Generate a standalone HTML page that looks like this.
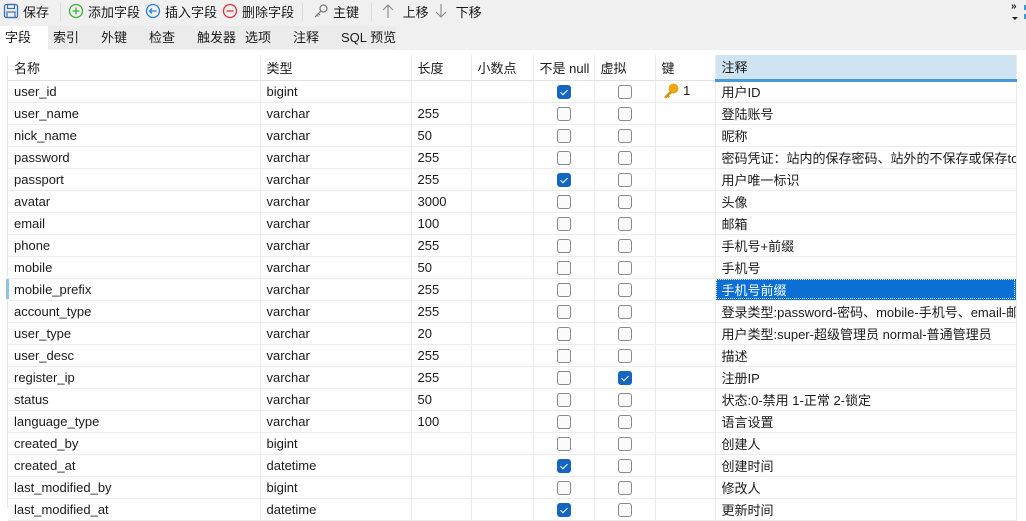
<!DOCTYPE html>
<html><head><meta charset="utf-8">
<style>
*{box-sizing:border-box;margin:0;padding:0}
body{width:1026px;height:508px;overflow:hidden;background:#fff;font-family:"Liberation Sans","Noto Sans CJK SC",sans-serif;font-size:13px;color:#1a1a1a;position:relative}
.tb{position:absolute;left:0;top:0;width:1026px;height:50px;background:#f0f0f0}
.btn{position:absolute;top:1px;height:20px;display:flex;align-items:center;gap:4px;font-size:13px}
.sep{position:absolute;top:3px;width:1px;height:18px;background:#dcdcdc}
.tab{position:absolute;top:26px;height:24px;line-height:24px;font-size:13px;padding-left:5px}
.tabs-bg{position:absolute;top:26px;left:48px;width:348px;height:23px;background:#ebebeb}
.act{background:#fff;left:0;width:48px;height:24px}
table{position:absolute;left:8px;top:55px;border-collapse:collapse;table-layout:fixed;width:1008px}
td,th{height:22px;border-right:1px solid #ececec;border-bottom:1px solid #ececec;padding-left:6px;font-weight:normal;text-align:left;white-space:nowrap;overflow:hidden;font-size:13px}
th{height:26px;border-bottom:1px solid #e2e2e2}
th.cm{background:#cfe4f3;border-bottom:3px solid #4a98dc}
.c{text-align:center;padding:0}
.cb{display:inline-block;width:14px;height:14px;border:1px solid #8a8a8a;border-radius:3px;vertical-align:middle;background:#fbfbfb}
.ck{background:#1566c0;border-color:#1566c0;position:relative}
.ck:after{content:"";position:absolute;left:4px;top:2px;width:3px;height:6px;border:solid #fff;border-width:0 1.2px 1.2px 0;transform:rotate(45deg)}
tr.sel td.cm{background:#0b6fd4;color:#fff;outline:1px dotted #fff;outline-offset:-2px}
.gut{position:absolute;left:0;top:56px;width:8px;height:452px;border-right:1px solid #e6e6e6}
</style></head><body>
<div class="tb">
 <div class="btn" style="left:3px"><svg width="16" height="16" viewBox="0 0 16 16"><rect x="1.5" y="1.5" width="13" height="13" rx="2" fill="none" stroke="#3b6fb0" stroke-width="1.3"/><rect x="4.5" y="1.5" width="7" height="4" fill="none" stroke="#3b6fb0" stroke-width="1.2"/><rect x="4" y="9" width="8" height="5.5" fill="none" stroke="#3b6fb0" stroke-width="1.2"/></svg>保存</div>
 <div class="sep" style="left:60px"></div>
 <div class="btn" style="left:68px"><svg width="16" height="16" viewBox="0 0 16 16"><circle cx="8" cy="8" r="6.5" fill="none" stroke="#3fae3a" stroke-width="1.3"/><path d="M8 4.5v7M4.5 8h7" stroke="#3fae3a" stroke-width="1.3"/></svg>添加字段</div>
 <div class="btn" style="left:145px"><svg width="16" height="16" viewBox="0 0 16 16"><circle cx="8" cy="8" r="6.5" fill="none" stroke="#2a7fd6" stroke-width="1.3"/><path d="M11.5 8h-7M7 5.5L4.5 8 7 10.5" fill="none" stroke="#2a7fd6" stroke-width="1.3"/></svg>插入字段</div>
 <div class="btn" style="left:222px"><svg width="16" height="16" viewBox="0 0 16 16"><circle cx="8" cy="8" r="6.5" fill="none" stroke="#d9343a" stroke-width="1.3"/><path d="M4.5 8h7" stroke="#d9343a" stroke-width="1.3"/></svg>删除字段</div>
 <div class="sep" style="left:302px"></div>
 <div class="btn" style="left:313px"><svg width="16" height="16" viewBox="0 0 16 16"><circle cx="10.5" cy="5.5" r="3.5" fill="none" stroke="#777" stroke-width="1.2"/><path d="M8 8L2 14M4 12l1.5 1.5M5.5 10.5L7 12" stroke="#777" stroke-width="1.2"/></svg>主键</div>
 <div class="sep" style="left:371px"></div>
 <div class="btn" style="left:381px"><svg width="14" height="16" viewBox="0 0 14 16"><path d="M7 15V2M2 7l5-5 5 5" fill="none" stroke="#888" stroke-width="1.1"/></svg>&nbsp;上移</div>
 <div class="btn" style="left:434px"><svg width="14" height="16" viewBox="0 0 14 16"><path d="M7 1v13M2 9l5 5 5-5" fill="none" stroke="#888" stroke-width="1.1"/></svg>&nbsp;下移</div>
 <div style="position:absolute;left:1011px;top:1px;font-size:10px;font-weight:bold">»</div>
 <div style="position:absolute;left:1012px;top:17px;width:0;height:0;border-left:3px solid transparent;border-right:3px solid transparent;border-top:3px solid #222"></div>
 <div style="position:absolute;left:1024px;top:5px;width:2px;height:5px;background:#3a9ad9"></div>
 <div style="position:absolute;left:1024px;top:14px;width:2px;height:5px;background:#3a9ad9"></div>
</div>
<div class="tabs-bg"></div>
<div class="tab act">字段</div>
<div class="tab" style="left:48px">索引</div>
<div class="tab" style="left:96px">外键</div>
<div class="tab" style="left:144px">检查</div>
<div class="tab" style="left:192px">触发器</div>
<div class="tab" style="left:240px">选项</div>
<div class="tab" style="left:288px">注释</div>
<div class="tab" style="left:336px">SQL 预览</div>
<div class="gut"></div>
<div style="position:absolute;left:6px;top:279px;width:3px;height:20px;background:#8cc3ec"></div>
<table>
<colgroup><col style="width:252px"><col style="width:151px"><col style="width:60px"><col style="width:62px"><col style="width:61px"><col style="width:61px"><col style="width:60px"><col style="width:301px"></colgroup>
<tr><th style="height:25px">名称</th><th style="height:25px">类型</th><th style="height:25px">长度</th><th style="height:25px">小数点</th><th style="height:25px">不是 null</th><th style="height:25px">虚拟</th><th style="height:25px">键</th><th class="cm" style="height:25px">注释</th></tr>
<tr><td>user_id</td><td>bigint</td><td></td><td></td><td class="c"><span class="cb ck"></span></td><td class="c"><span class="cb"></span></td><td><svg width="18" height="16" viewBox="0 0 18 16" style="vertical-align:middle"><circle cx="11.5" cy="5.5" r="5" fill="#e8a713"/><path d="M8 8L2 14l2 1.5 1.5-1.5 1 1 1.5-1.5-1-1L10.5 9.5z" fill="#d4920c"/></svg> 1</td><td class="cm">用户ID</td></tr>
<tr><td>user_name</td><td>varchar</td><td>255</td><td></td><td class="c"><span class="cb"></span></td><td class="c"><span class="cb"></span></td><td></td><td class="cm">登陆账号</td></tr>
<tr><td>nick_name</td><td>varchar</td><td>50</td><td></td><td class="c"><span class="cb"></span></td><td class="c"><span class="cb"></span></td><td></td><td class="cm">昵称</td></tr>
<tr><td>password</td><td>varchar</td><td>255</td><td></td><td class="c"><span class="cb"></span></td><td class="c"><span class="cb"></span></td><td></td><td class="cm">密码凭证：站内的保存密码、站外的不保存或保存toke</td></tr>
<tr><td>passport</td><td>varchar</td><td>255</td><td></td><td class="c"><span class="cb ck"></span></td><td class="c"><span class="cb"></span></td><td></td><td class="cm">用户唯一标识</td></tr>
<tr><td>avatar</td><td>varchar</td><td>3000</td><td></td><td class="c"><span class="cb"></span></td><td class="c"><span class="cb"></span></td><td></td><td class="cm">头像</td></tr>
<tr><td>email</td><td>varchar</td><td>100</td><td></td><td class="c"><span class="cb"></span></td><td class="c"><span class="cb"></span></td><td></td><td class="cm">邮箱</td></tr>
<tr><td>phone</td><td>varchar</td><td>255</td><td></td><td class="c"><span class="cb"></span></td><td class="c"><span class="cb"></span></td><td></td><td class="cm">手机号+前缀</td></tr>
<tr><td>mobile</td><td>varchar</td><td>50</td><td></td><td class="c"><span class="cb"></span></td><td class="c"><span class="cb"></span></td><td></td><td class="cm">手机号</td></tr>
<tr class="sel"><td>mobile_prefix</td><td>varchar</td><td>255</td><td></td><td class="c"><span class="cb"></span></td><td class="c"><span class="cb"></span></td><td></td><td class="cm">手机号前缀</td></tr>
<tr><td>account_type</td><td>varchar</td><td>255</td><td></td><td class="c"><span class="cb"></span></td><td class="c"><span class="cb"></span></td><td></td><td class="cm">登录类型:password-密码、mobile-手机号、email-邮</td></tr>
<tr><td>user_type</td><td>varchar</td><td>20</td><td></td><td class="c"><span class="cb"></span></td><td class="c"><span class="cb"></span></td><td></td><td class="cm">用户类型:super-超级管理员 normal-普通管理员</td></tr>
<tr><td>user_desc</td><td>varchar</td><td>255</td><td></td><td class="c"><span class="cb"></span></td><td class="c"><span class="cb"></span></td><td></td><td class="cm">描述</td></tr>
<tr><td>register_ip</td><td>varchar</td><td>255</td><td></td><td class="c"><span class="cb"></span></td><td class="c"><span class="cb ck"></span></td><td></td><td class="cm">注册IP</td></tr>
<tr><td>status</td><td>varchar</td><td>50</td><td></td><td class="c"><span class="cb"></span></td><td class="c"><span class="cb"></span></td><td></td><td class="cm">状态:0-禁用 1-正常 2-锁定</td></tr>
<tr><td>language_type</td><td>varchar</td><td>100</td><td></td><td class="c"><span class="cb"></span></td><td class="c"><span class="cb"></span></td><td></td><td class="cm">语言设置</td></tr>
<tr><td>created_by</td><td>bigint</td><td></td><td></td><td class="c"><span class="cb"></span></td><td class="c"><span class="cb"></span></td><td></td><td class="cm">创建人</td></tr>
<tr><td>created_at</td><td>datetime</td><td></td><td></td><td class="c"><span class="cb ck"></span></td><td class="c"><span class="cb"></span></td><td></td><td class="cm">创建时间</td></tr>
<tr><td>last_modified_by</td><td>bigint</td><td></td><td></td><td class="c"><span class="cb"></span></td><td class="c"><span class="cb"></span></td><td></td><td class="cm">修改人</td></tr>
<tr><td>last_modified_at</td><td>datetime</td><td></td><td></td><td class="c"><span class="cb ck"></span></td><td class="c"><span class="cb"></span></td><td></td><td class="cm">更新时间</td></tr>
</table>
</body></html>
